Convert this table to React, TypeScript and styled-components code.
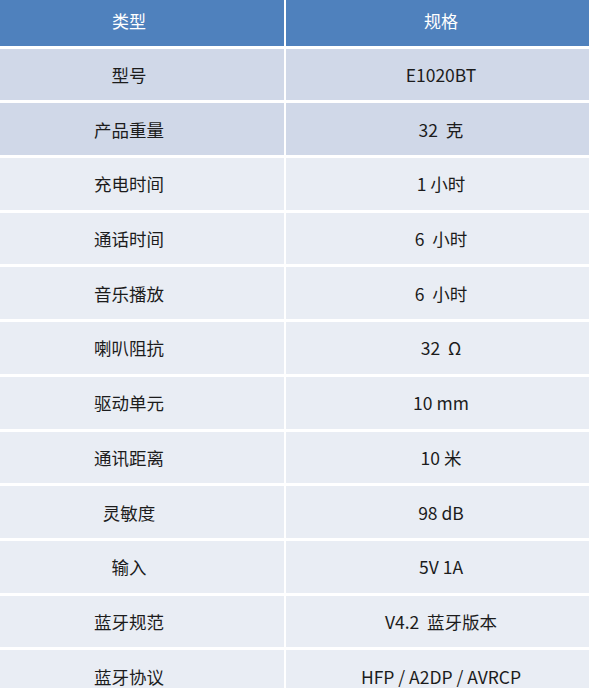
import { Fragment } from "react";
import styled, { createGlobalStyle } from "styled-components";

const GlobalStyle = createGlobalStyle`
  html, body {
    margin: 0;
    padding: 0;
    background: #ffffff;
  }
  body {
    font-family: "Noto Sans CJK SC", "Noto Sans", sans-serif;
  }
`

const Table = styled.div`
  display: grid;
  grid-template-columns: 284px 1fr;
  grid-template-rows: 45.7px;
  grid-auto-rows: 51.7px;
  column-gap: 2px;
  row-gap: 3px;
  background: #ffffff;
  width: 589px;
`

const HeadCell = styled.div<{ $side: "left" | "right" }>`
  background: #4f81bd;
  color: #ffffff;
  font-size: 17px;
  display: flex;
  align-items: center;
  justify-content: center;
  padding-bottom: 5px;
  padding-left: ${props => (props.$side === "left" ? "0" : "7px")};
  padding-right: ${props => (props.$side === "left" ? "26px" : "0")};
  box-sizing: border-box;
`

const Cell = styled.div<{ $side: "left" | "right"; $dark: boolean }>`
  background: ${props => (props.$dark ? "#d0d8e8" : "#e9edf4")};
  color: #1c1c1c;
  font-size: 17.5px;
  display: flex;
  align-items: center;
  justify-content: center;
  padding-left: ${props => (props.$side === "left" ? "0" : "7px")};
  padding-right: ${props => (props.$side === "left" ? "26px" : "0")};
  box-sizing: border-box;
  white-space: pre;
`

const specs: [string, string][] = [
  ["型号", "E1020BT"],
  ["产品重量", "32  克"],
  ["充电时间", "1 小时"],
  ["通话时间", "6  小时"],
  ["音乐播放", "6  小时"],
  ["喇叭阻抗", "32  Ω"],
  ["驱动单元", "10 mm"],
  ["通讯距离", "10 米"],
  ["灵敏度", "98 dB"],
  ["输入", "5V 1A"],
  ["蓝牙规范", "V4.2  蓝牙版本"],
  ["蓝牙协议", "HFP / A2DP / AVRCP"],
]

function App() {
  return (
    <>
      <GlobalStyle />
      <Table>
        <HeadCell $side="left">类型</HeadCell>
        <HeadCell $side="right">规格</HeadCell>
        {specs.map(([name, value], i) => (
          <Fragment key={name}>
            <Cell $side="left" $dark={i < 2}>{name}</Cell>
            <Cell $side="right" $dark={i < 2}>{value}</Cell>
          </Fragment>
        ))}
      </Table>
    </>
  )
}

export default App;
